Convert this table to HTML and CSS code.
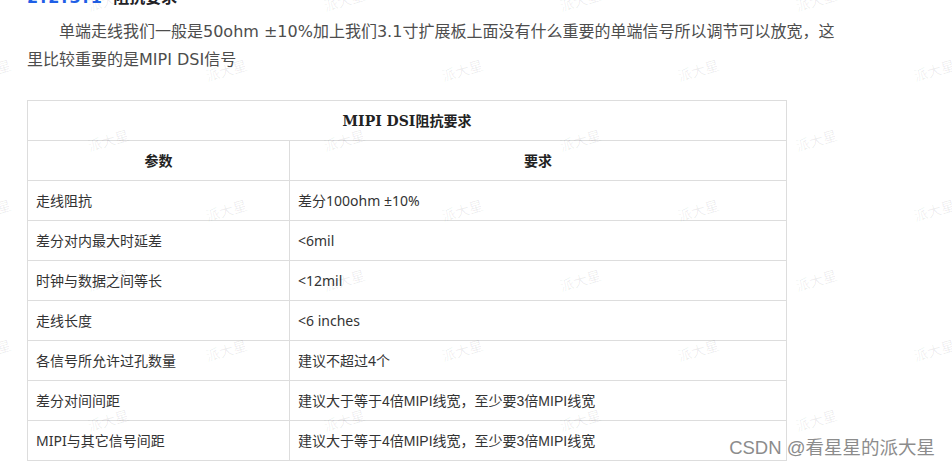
FILE: index.html
```html
<!DOCTYPE html>
<html lang="zh-CN">
<head>
<meta charset="utf-8">
<title>MIPI DSI阻抗要求</title>
<link rel="stylesheet" href="styles.css">
</head>
<body>
<div class="page">
  <article class="content">
    <h4 class="heading"><span class="num">2.2.3.1</span> 阻抗要求</h4>
    <p class="para">单端走线我们一般是50ohm ±10%加上我们3.1寸扩展板上面没有什么重要的单端信号所以调节可以放宽，这里比较重要的是MIPI DSI信号</p>
    <table class="spec">
      <colgroup><col class="c1"><col class="c2"></colgroup>
      <thead>
        <tr><th colspan="2" class="title">MIPI DSI阻抗要求</th></tr>
        <tr><th>参数</th><th>要求</th></tr>
      </thead>
      <tbody>
        <tr><td>走线阻抗</td><td>差分100ohm ±10%</td></tr>
        <tr><td>差分对内最大时延差</td><td>&lt;6mil</td></tr>
        <tr><td>时钟与数据之间等长</td><td>&lt;12mil</td></tr>
        <tr><td>走线长度</td><td>&lt;6 inches</td></tr>
        <tr><td>各信号所允许过孔数量</td><td>建议不超过4个</td></tr>
        <tr><td>差分对间间距</td><td class="narrow">建议大于等于4倍MIPI线宽，至少要3倍MIPI线宽</td></tr>
        <tr><td>MIPI与其它信号间距</td><td class="narrow">建议大于等于4倍MIPI线宽，至少要3倍MIPI线宽</td></tr>
      </tbody>
    </table>
  </article>

  <div class="wm-layer" aria-hidden="true">
    <div class="wm-row a"><span class="wm">派大星</span><span class="wm">派大星</span><span class="wm">派大星</span><span class="wm">派大星</span></div>
    <div class="wm-row b"><span class="wm">派大星</span><span class="wm">派大星</span><span class="wm">派大星</span><span class="wm">派大星</span><span class="wm">派大星</span></div>
    <div class="wm-row a"><span class="wm">派大星</span><span class="wm">派大星</span><span class="wm">派大星</span><span class="wm">派大星</span></div>
    <div class="wm-row b"><span class="wm">派大星</span><span class="wm">派大星</span><span class="wm">派大星</span><span class="wm">派大星</span><span class="wm">派大星</span></div>
    <div class="wm-row a"><span class="wm">派大星</span><span class="wm">派大星</span><span class="wm">派大星</span><span class="wm">派大星</span></div>
    <div class="wm-row b"><span class="wm">派大星</span><span class="wm">派大星</span><span class="wm">派大星</span><span class="wm">派大星</span><span class="wm">派大星</span></div>
    <div class="wm-row a"><span class="wm">派大星</span><span class="wm">派大星</span><span class="wm">派大星</span><span class="wm">派大星</span></div>
  </div>

  <div class="credit">CSDN @看星星的派大星</div>
</div>
</body>
</html>
```
FILE: styles.css
```css
html, body {
  margin: 0;
  padding: 0;
  background: #ffffff;
}

.page {
  position: relative;
  width: 952px;
  height: 469px;
  overflow: hidden;
  font-family: "DejaVu Sans", "Noto Sans CJK SC", sans-serif;
}

.content {
  padding-left: 27px;
}

.heading {
  margin: -14px 0 0 0;
  font-size: 16px;
  line-height: 24px;
  font-weight: bold;
  color: #222226;
}

.heading .num {
  color: #1f5fe6;
  letter-spacing: 2px;
  margin-right: 4px;
}

.para {
  margin: 8px 0 0 0;
  width: 815px;
  font-size: 16px;
  line-height: 28px;
  color: #4d4d4d;
  text-indent: 2em;
}

.spec {
  margin-top: 26px;
  border-collapse: collapse;
  table-layout: fixed;
  width: 760px;
  font-family: "Noto Sans", "Noto Sans CJK SC", sans-serif;
  font-size: 14px;
  color: #333333;
}

.spec col.c1 { width: 262px; }

.spec th,
.spec td {
  border: 1px solid #dddddd;
  height: 39px;
  line-height: 20px;
  padding: 0 8px;
  vertical-align: middle;
  white-space: nowrap;
}

.spec th {
  text-align: center;
  font-weight: bold;
  color: #222222;
}

.spec th.title {
  font-family: "DejaVu Serif", "Noto Sans CJK SC", serif;
}

.spec td {
  text-align: left;
}

.spec td.narrow {
  font-family: "Liberation Sans", "Noto Sans CJK SC", sans-serif;
}

.wm-layer {
  position: absolute;
  top: -35px;
  left: 0;
  width: 100%;
  pointer-events: none;
  display: flex;
  flex-direction: column;
}

.wm-row {
  height: 70px;
  display: flex;
  align-items: center;
  gap: 156px;
  white-space: nowrap;
}

.wm-row.a { padding-left: 68px; }
.wm-row.b { margin-left: -50px; }

.wm {
  flex: none;
  width: 80px;
  text-align: center;
  font-family: "Noto Sans CJK SC", sans-serif;
  font-size: 14px;
  line-height: 16px;
  color: rgba(0, 0, 0, 0.07);
  transform: rotate(-16deg);
}

.credit {
  position: absolute;
  right: 17px;
  top: 436px;
  font-family: "Liberation Sans", "Noto Sans CJK SC", sans-serif;
  font-size: 18.5px;
  line-height: 24px;
  color: #8c8c8c;
  text-shadow: 0 0 2px #ffffff;
}
```
